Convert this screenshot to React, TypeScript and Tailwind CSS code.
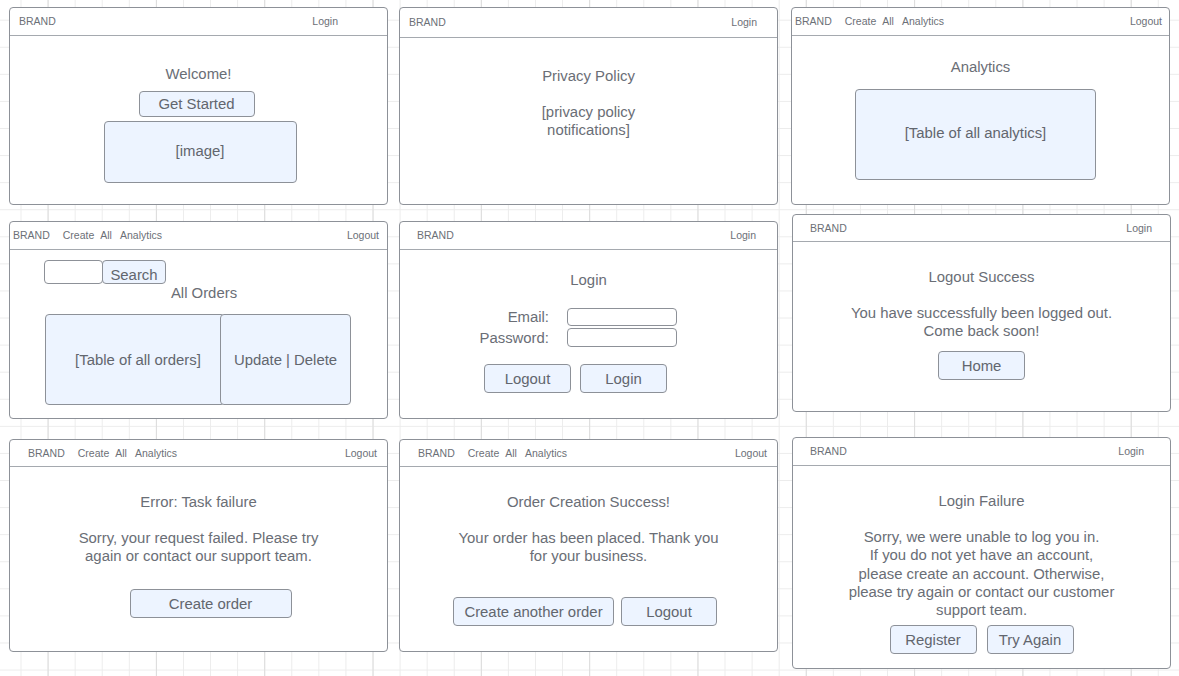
import React from "react";

type HeaderProps = { nav?: boolean; h: string; pad: string };

function Header({ nav, h, pad }: HeaderProps) {
  return (
    <div
      className={`flex shrink-0 items-center justify-between border-b border-[#a5a9af] text-[10.5px] leading-none text-[#6c7077] ${h} ${pad}`}
    >
      <div className="flex items-center">
        <span>BRAND</span>
        {nav && (
          <>
            <span className="ml-[13px]">Create</span>
            <span className="ml-[6px]">All</span>
            <span className="ml-[8px]">Analytics</span>
          </>
        )}
      </div>
      <span>{nav ? "Logout" : "Login"}</span>
    </div>
  );
}

type PanelProps = {
  nav?: boolean;
  h: string;
  pad: string;
  className: string;
  children?: React.ReactNode;
};

function Panel({ nav, h, pad, className, children }: PanelProps) {
  return (
    <div
      className={`flex w-[379px] flex-col overflow-hidden rounded-[4px] border border-[#8d9198] bg-white ${className}`}
    >
      <Header nav={nav} h={h} pad={pad} />
      <div className="flex flex-col items-center text-[14.9px] leading-[18px] text-[#6a6e76]">
        {children}
      </div>
    </div>
  );
}

function Btn({ className, children }: { className: string; children: React.ReactNode }) {
  return (
    <div
      className={`flex items-center justify-center rounded-[4px] border border-[#8d9198] bg-[#edf4ff] text-[#62666e] ${className}`}
    >
      {children}
    </div>
  );
}

export default function App() {
  return (
    <div
      className="flex h-[676px] w-[1179px] items-start overflow-hidden bg-white bg-[linear-gradient(to_right,#dcdcdc_1px,transparent_1px),linear-gradient(to_right,#ececec_1px,transparent_1px),linear-gradient(to_bottom,#ececec_1px,transparent_1px)] bg-size-[108.32px_100%,27.08px_100%,100%_27.08px] bg-position-[47.6px_0,20.5px_0,0_19.7px] pl-[9px] pt-[7px]"
      style={{ fontFamily: '"Liberation Sans", Arial, sans-serif' }}
    >
      {/* Column 1 */}
      <div className="flex flex-col">
        <Panel h="h-[28px]" pad="pl-[9px] pr-[49px]" className="h-[198px]">
          <div className="mt-[29px]">Welcome!</div>
          <Btn className="mt-[8px] mr-[4px] h-[26px] w-[116px]">Get Started</Btn>
          <Btn className="mt-[4px] ml-[3px] h-[62px] w-[193px] pb-[2px]">[image]</Btn>
        </Panel>

        <Panel nav h="h-[28px]" pad="pl-[3px] pr-[8px]" className="mt-[16px] h-[198px]">
          <div className="mt-[10px] ml-[34px] flex self-start">
            <div className="h-[24px] w-[59px] rounded-[4px] border border-[#8d9198] bg-white" />
            <div className="-ml-[1px] flex h-[24px] w-[64px] items-start justify-center rounded-[4px] border border-[#8d9198] bg-[#edf4ff] pt-[5px] text-[#62666e]">
              Search
            </div>
          </div>
          <div className="ml-[11px]">All Orders</div>
          <div className="mt-[12px] ml-[35px] flex self-start">
            <Btn className="h-[91px] w-[180px] pl-[6px]">[Table of all orders]</Btn>
            <Btn className="-ml-[5px] h-[91px] w-[131px]">Update | Delete</Btn>
          </div>
        </Panel>

        <Panel nav h="h-[27px]" pad="pl-[18px] pr-[10px]" className="mt-[20px] h-[213px]">
          <div className="mt-[26px]">Error: Task failure</div>
          <div className="mt-[18px] text-center">
            Sorry, your request failed. Please try
            <br />
            again or contact our support team.
          </div>
          <Btn className="mt-[24px] ml-[24px] h-[29px] w-[162px]">Create order</Btn>
        </Panel>
      </div>

      {/* Column 2 */}
      <div className="ml-[11px] flex flex-col">
        <Panel h="h-[30px]" pad="pl-[9px] pr-[20px]" className="h-[198px]">
          <div className="mt-[29px]">Privacy Policy</div>
          <div className="mt-[18px] text-center">
            [privacy policy
            <br />
            notifications]
          </div>
        </Panel>

        <Panel h="h-[28px]" pad="pl-[17px] pr-[21px]" className="mt-[16px] h-[198px]">
          <div className="mt-[21px]">Login</div>
          <div className="mt-[19px] flex items-center self-start">
            <div className="w-[149px] text-right">Email:</div>
            <div className="ml-[18px] h-[18px] w-[110px] rounded-[4px] border border-[#8d9198] bg-white" />
          </div>
          <div className="mt-[2px] flex items-center self-start">
            <div className="w-[149px] text-right">Password:</div>
            <div className="ml-[18px] h-[19px] w-[110px] rounded-[4px] border border-[#8d9198] bg-white" />
          </div>
          <div className="mt-[17px] ml-[84px] flex gap-[9px] self-start">
            <Btn className="h-[29px] w-[87px]">Logout</Btn>
            <Btn className="h-[29px] w-[87px]">Login</Btn>
          </div>
        </Panel>

        <Panel nav h="h-[27px]" pad="pl-[18px] pr-[10px]" className="mt-[20px] h-[213px]">
          <div className="mt-[26px]">Order Creation Success!</div>
          <div className="mt-[18px] text-center">
            Your order has been placed. Thank you
            <br />
            for your business.
          </div>
          <div className="mt-[32px] mr-[7px] flex gap-[7px]">
            <Btn className="h-[29px] w-[161px]">Create another order</Btn>
            <Btn className="h-[29px] w-[96px]">Logout</Btn>
          </div>
        </Panel>
      </div>

      {/* Column 3 */}
      <div className="ml-[13px] flex flex-col">
        <Panel nav h="h-[28px]" pad="pl-[3px] pr-[7px]" className="h-[198px]">
          <div className="mt-[22px]">Analytics</div>
          <Btn className="mt-[13px] mr-[10px] h-[91px] w-[241px] pb-[4px]">[Table of all analytics]</Btn>
        </Panel>

        <Panel h="h-[27px]" pad="pl-[17px] pr-[18px]" className="mt-[9px] ml-[1px] h-[198px]">
          <div className="mt-[26px]">Logout Success</div>
          <div className="mt-[18px] text-center">
            You have successfully been logged out.
            <br />
            Come back soon!
          </div>
          <Btn className="mt-[11px] h-[29px] w-[87px]">Home</Btn>
        </Panel>

        <Panel h="h-[28px]" pad="pl-[17px] pr-[26px]" className="mt-[25px] ml-[1px] h-[232px]">
          <div className="mt-[26px]">Login Failure</div>
          <div className="mt-[18px] text-center leading-[18.25px]">
            Sorry, we were unable to log you in.
            <br />
            If you do not yet have an account,
            <br />
            please create an account. Otherwise,
            <br />
            please try again or contact our customer
            <br />
            support team.
          </div>
          <div className="mt-[6px] flex gap-[10px]">
            <Btn className="h-[29px] w-[87px]">Register</Btn>
            <Btn className="h-[29px] w-[87px]">Try Again</Btn>
          </div>
        </Panel>
      </div>
    </div>
  );
}
